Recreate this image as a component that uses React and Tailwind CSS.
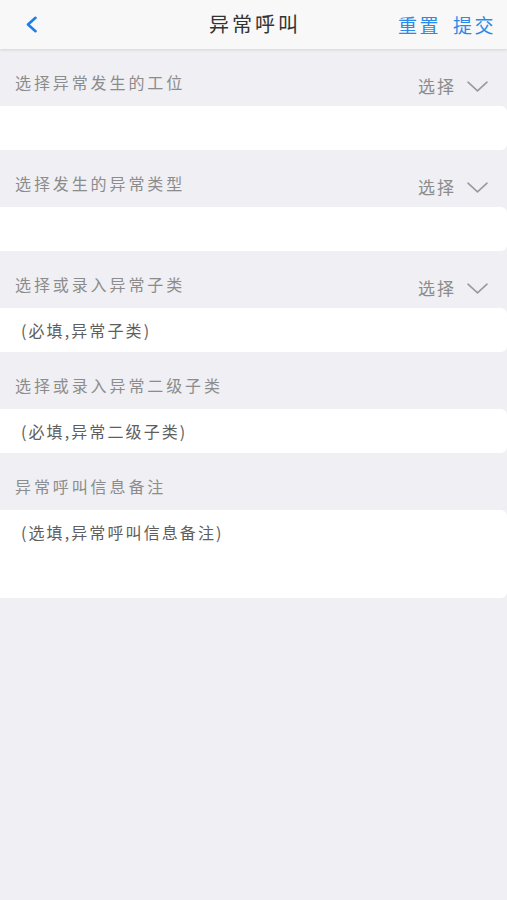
const sections = [
  { label: '选择异常发生的工位', select: true, placeholder: '', tall: false },
  { label: '选择发生的异常类型', select: true, placeholder: '', tall: false },
  { label: '选择或录入异常子类', select: true, placeholder: '(必填,异常子类)', tall: false },
  { label: '选择或录入异常二级子类', select: false, placeholder: '(必填,异常二级子类)', tall: false },
  { label: '异常呼叫信息备注', select: false, placeholder: '(选填,异常呼叫信息备注)', tall: true },
];

function Section({ label, select, placeholder, tall }) {
  return (
    <div>
      {/* label row */}
      <div className="flex h-[57px] items-start justify-between pl-[15px] pr-[19px] pt-[23px]">
        <span className="text-[16px] leading-[20px] tracking-[2.9px] text-[#8c8c8c]">{label}</span>
        {select && (
          <div className="mt-[4px] flex items-center gap-[11px]">
            <span className="text-[17px] leading-[20px] tracking-[2px] text-[#8c8c8c]">选择</span>
            <svg width="21" height="11" viewBox="0 0 21 11" fill="none">
              <path d="M1 1.2 L10.5 9.8 L20 1.2" stroke="#9a9a9a" strokeWidth="1.6" strokeLinecap="round" strokeLinejoin="round" />
            </svg>
          </div>
        )}
      </div>
      {/* input box */}
      <div className={`rounded-r-[6px] bg-white pl-[21px] pt-[10px] ${tall ? 'h-[88px]' : 'h-[44px]'}`}>
        {placeholder && (
          <span className="text-[16px] leading-[22px] tracking-[2.1px] text-[#5e5e5e]">{placeholder}</span>
        )}
      </div>
    </div>
  );
}

export default function App() {
  return (
    <div
      className="min-h-[900px] w-full bg-[#efeff4]"
      style={{ fontFamily: '"Noto Sans CJK SC", "Noto Sans", sans-serif' }}
    >
      {/* header */}
      <div className="relative flex h-[49px] items-center justify-between bg-[#f8f8f8] pl-[25px] pr-[11px] shadow-[0_1px_3px_rgba(0,0,0,0.12)]">
        <svg width="13" height="17" viewBox="0 0 13 17" fill="none">
          <path d="M10.5 1.8 L3 8.5 L10.5 15.2" stroke="#1a7fe8" strokeWidth="2.6" strokeLinecap="round" strokeLinejoin="round" />
        </svg>
        <span className="absolute left-1/2 top-[12px] -translate-x-1/2 pl-[3px] text-[20px] leading-[24px] tracking-[3px] text-[#333333]">
          异常呼叫
        </span>
        <div className="flex items-center gap-[12px]">
          <span className="text-[19px] leading-[24px] tracking-[2.5px] text-[#2a8ae8]">重置</span>
          <span className="text-[19px] leading-[24px] tracking-[2.5px] text-[#2a8ae8]">提交</span>
        </div>
      </div>
      {sections.map((s) => (
        <Section key={s.label} {...s} />
      ))}
    </div>
  );
}
